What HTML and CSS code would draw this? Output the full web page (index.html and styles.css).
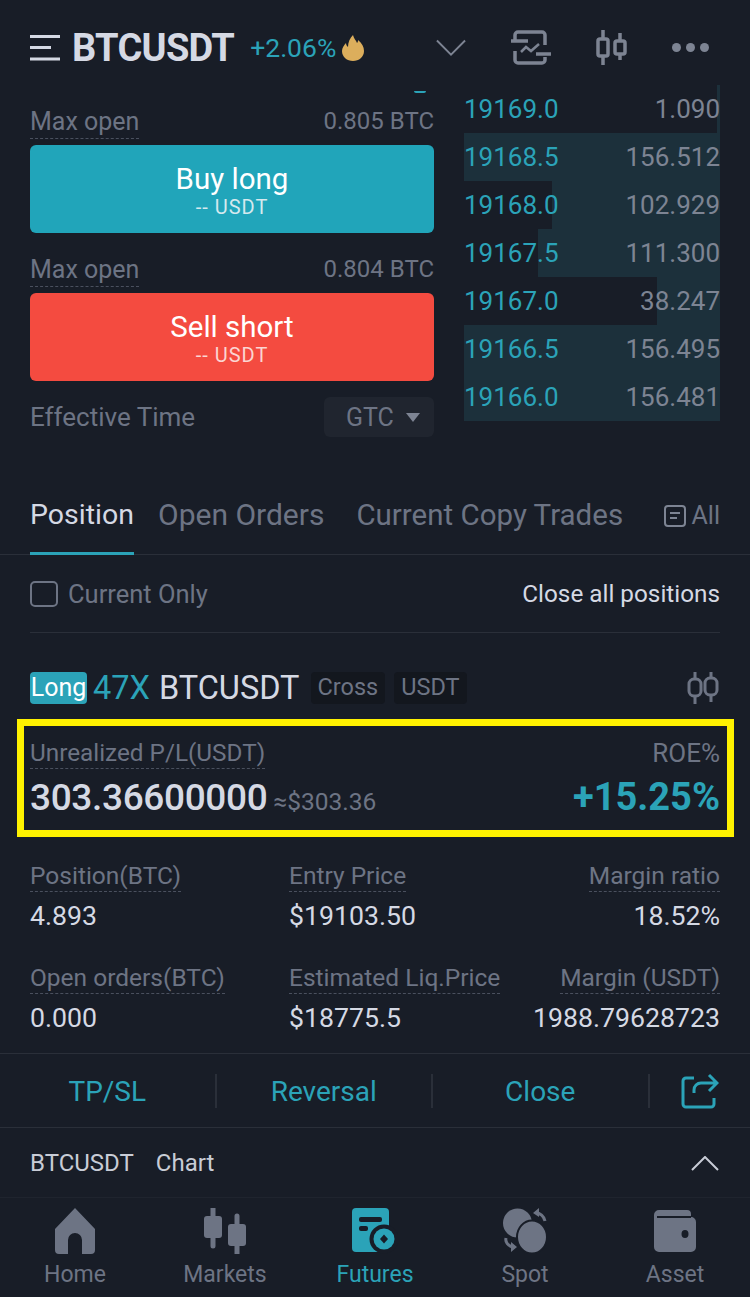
FILE: index.html
```html
<!DOCTYPE html>
<html>
<head>
	<meta charset="UTF-8">
	<title>BTCUSDT</title>
	<link rel="stylesheet" href="styles.css">
</head>
<body>
	<div class="page">
		<header class="top">
			<svg class="ic-menu" width="30" height="26" viewBox="0 0 30 26"><path d="M0 1.500h30M0 12.500h21M0 24h30" stroke="#d5d9e4" stroke-width="3" fill="none"/></svg>
			<span class="top-name">BTCUSDT</span>
			<span class="top-pct">+2.06%</span>
			<svg class="ic-fire" width="24" height="26" viewBox="0 0 24 26"><path d="M12 0c1 4 3 5 4 8 1-1 1-2 1-3 4 3 6 7 6 11 0 6-5 10-11 10S1 22 1 16c0-3 2-6 4-8 0 2 1 3 2 4 0-5 2-9 5-12z" fill="#dcae5c"/></svg>
			<svg class="ic-down" width="30" height="18" viewBox="0 0 32 18"><path d="M1 1l15 15L31 1" stroke="#7d8493" stroke-width="2" fill="none"/></svg>
			<svg class="ic-chart" width="40" height="36" viewBox="0 0 40 36"><path d="M4 11V5a3 3 0 0 1 3-3h24a3 3 0 0 1 3 3v10M4 21v9a3 3 0 0 0 3 3h24a3 3 0 0 0 3-3v-3" stroke="#7d8493" stroke-width="3.500" fill="none"/><path d="M0 11h17M25 24h15" stroke="#7d8493" stroke-width="3.500"/><path d="M10 22l5-5 5 4 8-7" stroke="#7d8493" stroke-width="2.500" fill="none"/></svg>
			<svg class="ic-candle" width="34" height="36" viewBox="0 0 34 36"><path d="M8 0v8M8 27v8M25 3v7M25 25v5" stroke="#7d8493" stroke-width="3.500"/><rect x="3" y="9" width="10" height="17" rx="2" stroke="#7d8493" stroke-width="3.500" fill="none"/><rect x="20" y="11" width="10" height="13" rx="2" stroke="#7d8493" stroke-width="3.500" fill="none"/></svg>
			<div class="dots"><i></i><i></i><i></i></div>
		</header>

		<section class="trade">
			<div class="trade-left">
				<span class="arc"></span>
				<div class="open-row"><span class="dash">Max open</span><span>0.805 BTC</span></div>
				<div class="btn btn-buy"><b>Buy long</b><small>-- USDT</small></div>
				<div class="open-row"><span class="dash">Max open</span><span>0.804 BTC</span></div>
				<div class="btn btn-sell"><b>Sell short</b><small>-- USDT</small></div>
				<div class="time-row">
					<span>Effective Time</span>
					<span class="gtc">GTC<i class="caret"></i></span>
				</div>
			</div>
			<div class="book">
				<div class="book-row"><span class="fill" style="width: 1%"></span><span class="price">19169.0</span><span class="qty">1.090</span></div>
				<div class="book-row"><span class="fill" style="width: 100%"></span><span class="price">19168.5</span><span class="qty">156.512</span></div>
				<div class="book-row"><span class="fill" style="width: 65.6%"></span><span class="price">19168.0</span><span class="qty">102.929</span></div>
				<div class="book-row"><span class="fill" style="width: 71%"></span><span class="price">19167.5</span><span class="qty">111.300</span></div>
				<div class="book-row"><span class="fill" style="width: 24.5%"></span><span class="price">19167.0</span><span class="qty">38.247</span></div>
				<div class="book-row"><span class="fill" style="width: 100%"></span><span class="price">19166.5</span><span class="qty">156.495</span></div>
				<div class="book-row"><span class="fill" style="width: 100%"></span><span class="price">19166.0</span><span class="qty">156.481</span></div>
			</div>
		</section>

		<nav class="tabs">
			<span class="tab tab-on">Position</span>
			<span class="tab tab-orders">Open Orders</span>
			<span class="tab tab-copy">Current Copy Trades</span>
			<span class="tab-all">
				<svg width="22" height="22" viewBox="0 0 22 22"><rect x="1" y="1" width="20" height="20" rx="3" stroke="#7d8493" stroke-width="2" fill="none"/><path d="M6 8h10M6 13h7" stroke="#7d8493" stroke-width="2"/></svg>
				All
			</span>
		</nav>

		<div class="filter">
			<span class="check-wrap"><i class="check"></i>Current Only</span>
			<span class="close-all">Close all positions</span>
		</div>

		<div class="pos-head">
			<span class="tag-long">Long</span>
			<span class="lev">47X</span>
			<span class="pos-name">BTCUSDT</span>
			<span class="tag">Cross</span>
			<span class="tag">USDT</span>
			<svg class="pos-ic" width="34" height="32" viewBox="0 0 34 32"><path d="M9 0v6M9 25v7M25 0v5M25 24v6" stroke="#6d7484" stroke-width="3"/><rect x="3" y="7" width="12" height="17" rx="5" stroke="#6d7484" stroke-width="3" fill="none"/><rect x="19" y="6" width="12" height="17" rx="5" stroke="#6d7484" stroke-width="3" fill="none"/></svg>
		</div>

		<div class="pl-box">
			<div class="pl-line">
				<span class="dash">Unrealized P/L(USDT)</span>
				<span class="roe-label">ROE%</span>
			</div>
			<div class="pl-line pl-values">
				<span><b class="pl-num">303.36600000</b> <span class="pl-usd">≈$303.36</span></span>
				<b class="roe">+15.25%</b>
			</div>
		</div>

		<div class="stats">
			<div class="stat"><span class="dash">Position(BTC)</span><b>4.893</b></div>
			<div class="stat"><span class="dash">Entry Price</span><b>$19103.50</b></div>
			<div class="stat stat-r"><span class="dash">Margin ratio</span><b>18.52%</b></div>
			<div class="stat"><span class="dash">Open orders(BTC)</span><b>0.000</b></div>
			<div class="stat"><span class="dash">Estimated Liq.Price</span><b>$18775.5</b></div>
			<div class="stat stat-r"><span class="dash">Margin (USDT)</span><b>1988.79628723</b></div>
		</div>

		<div class="actions">
			<span class="act">TP/SL</span>
			<span class="act">Reversal</span>
			<span class="act">Close</span>
			<span class="act-share">
				<svg width="38" height="36" viewBox="0 0 38 36"><path d="M13 5H5a3 3 0 0 0-3 3v23a3 3 0 0 0 3 3h25a3 3 0 0 0 3-3v-6" stroke="#2ba3b8" stroke-width="3" fill="none"/><path d="M13 20v-3a7 7 0 0 1 7-7h14M28 2l8 8-8 8" stroke="#2ba3b8" stroke-width="3" fill="none"/></svg>
			</span>
		</div>

		<div class="chart-row">
			<span>BTCUSDT</span><span class="chart-word">Chart</span>
			<svg width="28" height="15" viewBox="0 0 28 15"><path d="M1 14L14 1l13 13" stroke="#c8ccd6" stroke-width="2" fill="none"/></svg>
		</div>

		<footer class="tabbar">
			<div class="bar-item">
				<svg width="42" height="46" viewBox="0 0 42 46"><path d="M21 0L41 21v21a4 4 0 0 1-4 4h-9V32a7 7 0 0 0-14 0v14H5a4 4 0 0 1-4-4V21z" fill="#6d7484"/></svg>
				<span>Home</span>
			</div>
			<div class="bar-item">
				<svg width="44" height="46" viewBox="0 0 44 46"><path d="M10 0v38M34 8v38" stroke="#6d7484" stroke-width="5" stroke-linecap="round"/><rect x="1" y="8" width="18" height="22" rx="3" fill="#6d7484"/><rect x="25" y="16" width="18" height="22" rx="3" fill="#6d7484"/></svg>
				<span>Markets</span>
			</div>
			<div class="bar-item bar-on">
				<svg width="46" height="46" viewBox="0 0 46 46"><rect x="0" y="0" width="37" height="44" rx="4" fill="#2ba3b8"/><rect x="7" y="9" width="23" height="5" rx="2" fill="#181d27"/><rect x="7" y="18" width="9" height="5" rx="2" fill="#181d27"/><circle cx="32" cy="31" r="14.500" fill="#181d27"/><circle cx="32" cy="31" r="10.500" fill="#2ba3b8"/><path d="M32 26.500l4 4.500-4 4.500-4-4.500z" fill="#181d27"/></svg>
				<span>Futures</span>
			</div>
			<div class="bar-item">
				<svg width="44" height="46" viewBox="0 0 44 46"><circle cx="14.500" cy="15" r="14.500" fill="#6d7484"/><ellipse cx="29" cy="29" rx="15" ry="16.500" fill="#6d7484" stroke="#181d27" stroke-width="2"/><path d="M33 5c4 0 8 3 9 8M3 30c-1 4 2 8 7 9" stroke="#6d7484" stroke-width="3" fill="none"/><path d="M36 0l-6 5 6 4zM8 34l6 5-6 5z" fill="#6d7484"/></svg>
				<span>Spot</span>
			</div>
			<div class="bar-item">
				<svg width="42" height="42" viewBox="0 0 42 42"><path d="M5 0h28a4 4 0 0 1 4 4v3a5 5 0 0 1 5 5v25a5 5 0 0 1-5 5H5a5 5 0 0 1-5-5V5a5 5 0 0 1 5-5z" fill="#6d7484"/><path d="M3 7h34" stroke="#181d27" stroke-width="2"/><ellipse cx="31" cy="24" rx="3.500" ry="4" fill="#181d27"/></svg>
				<span>Asset</span>
			</div>
		</footer>
	</div>
</body>
</html>
```

FILE: styles.css
```css
* {
	box-sizing: border-box;
}
body {
	margin: 0;
	background-color: #181d27;
	font-family: Roboto, "Noto Sans", sans-serif;
	color: #6d7484;
}
.page {
	width: 750px;
	height: 1297px;
	display: flex;
	flex-direction: column;
	overflow: hidden;
}
.dash {
	border-bottom: 1px dashed #4a505e;
}

/* top bar */
.top {
	height: 91px;
	flex: none;
	display: flex;
	align-items: center;
	padding: 4px 41px 0 30px;
}
.top-name {
	margin-left: 12px;
	font-size: 38px;
	font-weight: 700;
	letter-spacing: -0.7px;
	color: #d5d9e4;
}
.top-pct {
	margin-left: 16px;
	font-size: 26.500px;
	color: #2ba3b8;
}
.ic-fire {
	margin-left: 5px;
}
.ic-down {
	margin-left: 71px;
}
.ic-chart {
	margin-left: 45px;
}
.ic-candle {
	margin-left: 44px;
}
.dots {
	margin-left: auto;
	display: flex;
	gap: 5px;
}
.dots i {
	width: 9px;
	height: 9px;
	border-radius: 50%;
	background-color: #7d8493;
}

/* trade panel */
.trade {
	height: 346px;
	flex: none;
	display: flex;
	justify-content: space-between;
	padding: 0 30px;
	font-size: 24px;
}
.trade-left {
	position: relative;
	width: 404px;
	padding-top: 12px;
}
.arc {
	position: absolute;
	top: 0;
	left: 384px;
	width: 12px;
	height: 2px;
	border-radius: 0 0 6px 6px;
	background-color: #2ba3b8;
}
.open-row {
	height: 42px;
	display: flex;
	justify-content: space-between;
	align-items: flex-start;
	line-height: 36px;
}
.open-row span:first-child {
	margin-top: 3px;
	font-size: 25px;
	line-height: 32px;
}
.btn {
	height: 88px;
	margin-bottom: 18px;
	padding-top: 6px;
	border-radius: 6px;
	display: flex;
	flex-direction: column;
	align-items: center;
	justify-content: center;
	color: #fff;
}
.btn b {
	font-size: 29.500px;
	font-weight: 400;
	line-height: 30px;
}
.btn small {
	font-size: 20px;
	letter-spacing: 1px;
	line-height: 26px;
	color: #d5e9ee;
}
.btn-buy {
	background-color: #21a5ba;
}
.btn-sell {
	background-color: #f44b40;
}
.btn-sell small {
	color: #fbd5d2;
}
.time-row {
	display: flex;
	justify-content: space-between;
	align-items: center;
	height: 40px;
	margin-top: -2px;
	font-size: 26px;
}
.gtc {
	width: 110px;
	height: 40px;
	padding-left: 22px;
	border-radius: 6px;
	background-color: #20252f;
	display: flex;
	align-items: center;
	gap: 12px;
	font-size: 25px;
}
.caret {
	border: 7px solid transparent;
	border-top: 9px solid #7d8493;
	border-bottom: none;
}
.book {
	width: 256px;
	margin-top: -6px;
}
.book-row {
	position: relative;
	height: 48px;
	display: flex;
	justify-content: space-between;
	align-items: center;
	font-size: 26px;
}
.fill {
	position: absolute;
	top: 0;
	bottom: 0;
	right: 0;
	background-color: #1c303b;
}
.price {
	position: relative;
	color: #2ba3b8;
}
.qty {
	position: relative;
	color: #7d8493;
}

/* tabs */
.tabs {
	height: 118px;
	flex: none;
	display: flex;
	align-items: flex-end;
	padding: 0 30px;
	border-bottom: 1px solid #2a2f39;
	font-size: 30px;
}
.tab {
	height: 56px;
	margin-bottom: -1px;
	line-height: 32px;
}
.tab-on {
	width: 104px;
	font-size: 28.500px;
	color: #d5d9e4;
	border-bottom: 3px solid #2ba3b8;
}
.tab-orders {
	margin-left: 24px;
}
.tab-copy {
	margin-left: 32px;
	font-size: 29.500px;
}
.tab-all {
	margin-left: auto;
	height: 56px;
	margin-bottom: -1px;
	display: flex;
	align-items: flex-start;
	gap: 6px;
	font-size: 25px;
	line-height: 34px;
}
.tab-all svg {
	margin-top: 6px;
}

/* position */
.filter {
	height: 78px;
	margin: 0 30px;
	flex: none;
	display: flex;
	justify-content: space-between;
	align-items: center;
	border-bottom: 1px solid #2a2f39;
	font-size: 24.300px;
}
.check-wrap {
	display: flex;
	align-items: center;
	gap: 10px;
	font-size: 25.500px;
}
.check {
	width: 28px;
	height: 26px;
	border: 2px solid #6d7484;
	border-radius: 5px;
}
.close-all {
	color: #d5d9e4;
}
.pos-head {
	height: 86px;
	margin: 0 30px;
	flex: none;
	display: flex;
	align-items: center;
	padding-top: 23px;
	font-size: 32.500px;
}
.tag-long {
	width: 57px;
	height: 32px;
	border-radius: 4px;
	background-color: #2ba3b8;
	color: #fff;
	font-size: 25px;
	line-height: 32px;
	text-align: center;
}
.lev {
	margin-left: 6px;
	color: #2ba3b8;
}
.pos-name {
	margin-left: 9px;
	margin-right: 11px;
	color: #d5d9e4;
}
.tag {
	height: 32px;
	margin-right: 9px;
	padding: 0 7px;
	border-radius: 4px;
	background-color: #13171e;
	font-size: 23.500px;
	line-height: 30px;
}
.pos-ic {
	margin-left: auto;
}
.pl-box {
	height: 118px;
	margin: 0 16px 0 17px;
	flex: none;
	border: 7px solid #fff200;
	padding: 12px 7px 0 6px;
}
.pl-line {
	display: flex;
	justify-content: space-between;
	font-size: 24.300px;
	line-height: 30px;
}
.roe-label {
	font-size: 26px;
}
.pl-values {
	align-items: baseline;
	margin-top: 6px;
	line-height: 44px;
}
.pl-num {
	font-size: 37px;
	font-weight: 500;
	letter-spacing: -0.35px;
	color: #d5d9e4;
}
.pl-usd {
	font-size: 24.500px;
}
.roe {
	font-size: 38px;
	font-weight: 700;
	color: #2ba3b8;
}

/* stats */
.stats {
	height: 216px;
	margin: 0 30px;
	padding-top: 24px;
	flex: none;
	display: grid;
	grid-template-columns: 259px 1fr auto;
	grid-auto-rows: 102px;
	font-size: 24.500px;
}
.stat {
	display: flex;
	flex-direction: column;
	align-items: flex-start;
	gap: 8px;
}
.stat span {
	line-height: 30px;
}
.stat b {
	font-weight: 400;
	font-size: 26.700px;
	line-height: 32px;
	color: #d5d9e4;
}
.stat-r {
	align-items: flex-end;
}

/* actions */
.actions {
	height: 75px;
	flex: none;
	display: flex;
	align-items: center;
	border-top: 1px solid #2a2f39;
	border-bottom: 1px solid #2a2f39;
	font-size: 28px;
	color: #2ba3b8;
}
.act {
	width: 216.500px;
	height: 34px;
	line-height: 36px;
	text-align: center;
	border-right: 2px solid #2a2f39;
}
.act-share {
	flex: 1;
	display: flex;
	justify-content: center;
}

.chart-row {
	height: 70px;
	flex: none;
	display: flex;
	align-items: center;
	padding: 0 31px 0 30px;
	font-size: 24px;
	color: #c8ccd6;
}
.chart-word {
	margin-left: 22px;
}
.chart-row svg {
	margin-left: auto;
}

/* bottom bar */
.tabbar {
	flex: 1;
	display: flex;
	padding-top: 10px;
	background-color: #181d27;
	box-shadow: 0 -1px 0 #1f242e;
}
.bar-item {
	flex: 1;
	display: flex;
	flex-direction: column;
	align-items: center;
	font-size: 23px;
}
.bar-item svg {
	height: 46px;
}
.bar-item span {
	margin-top: 7px;
}
.bar-on {
	color: #2ba3b8;
}
```
